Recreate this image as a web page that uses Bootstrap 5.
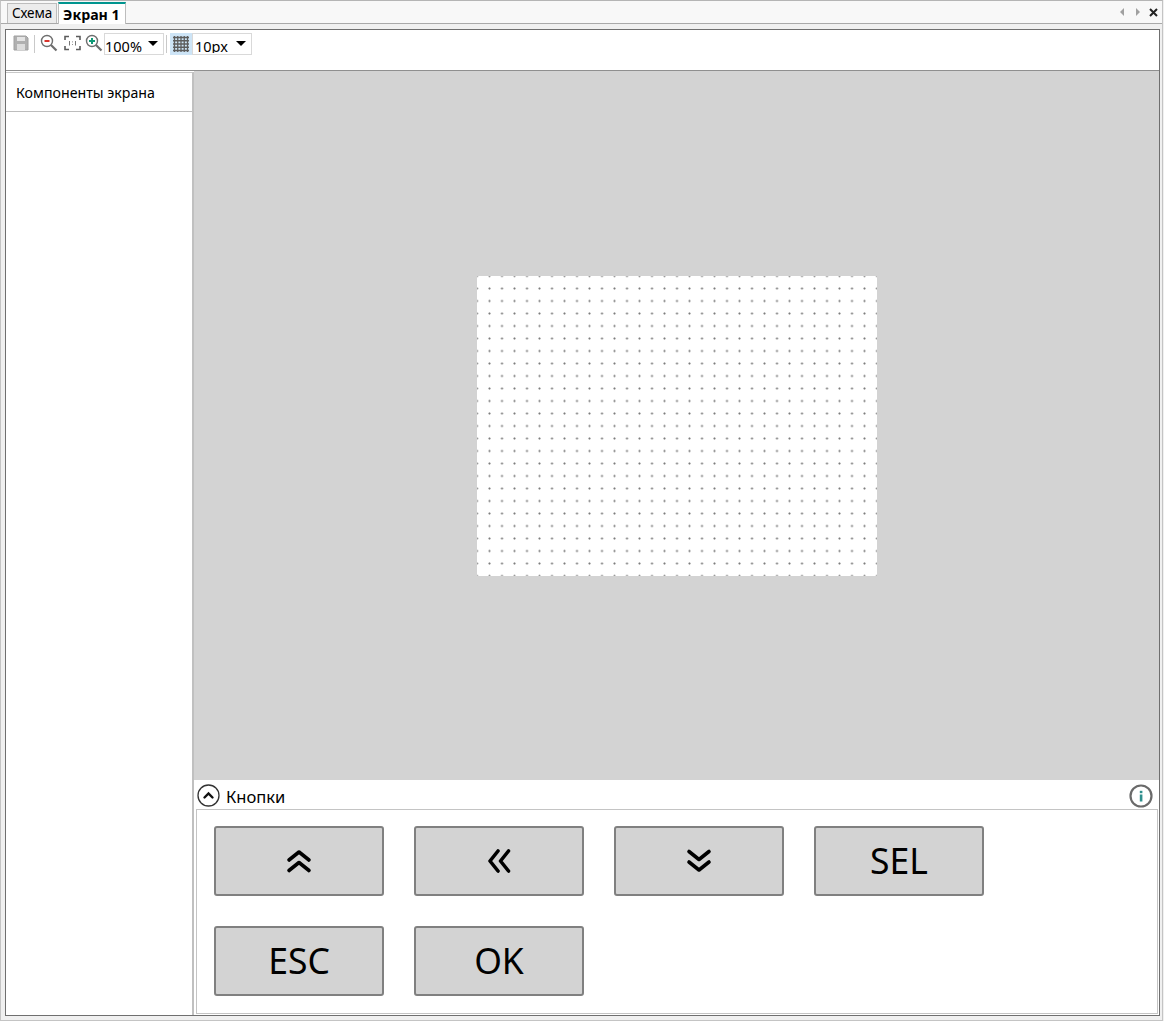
<!DOCTYPE html>
<html lang="ru">
<head>
<meta charset="utf-8">
<title>Экран 1</title>
<link href="https://cdn.jsdelivr.net/npm/bootstrap@5.3.0/dist/css/bootstrap.min.css" rel="stylesheet">
<style>
html,body{height:100%;}
body{font-family:"Noto Sans","Open Sans","Liberation Sans",sans-serif;background:#f0f0f0;color:#000;overflow:hidden;}
.app-shell{width:1163px;height:1021px;display:flex;flex-direction:column;border-top:1px solid #b5b5b5;border-left:1px solid #c4c4c4;border-right:1px solid #c4c4c4;border-bottom:1px solid #c4c4c4;}
.tab-strip{height:23px;background:#f8f8f8;border-bottom:1px solid #a9a9a9;display:flex;align-items:flex-end;padding-left:6px;flex:none;}
.tab-item{font-size:13.5px;line-height:18px;height:20px;padding:0 4px 0 4px;background:#ececec;border:1px solid #bdbdbd;border-bottom:0;letter-spacing:-.1px;}
.tab-on{height:22px;margin-left:1px;padding:2px 5px 0 4px;background:#fff;border:1px solid #bdbdbd;border-top:2px solid #00958f;border-bottom:0;font-weight:700;font-size:14.2px;line-height:18px;margin-bottom:-1px;}
.strip-ctrls{margin-left:auto;display:flex;align-items:center;gap:10px;height:22px;padding-right:4px;}
.ctrl-close{margin-left:-2px;}
.frame-outer{flex:1;padding:5px 2px 4px 4px;min-height:0;background:#f0f0f0;}
.frame-inner{height:100%;border:1px solid #6f6f6f;background:#fff;display:flex;flex-direction:column;}
.tool-row{height:41px;flex:none;border-bottom:1px solid #8f8f8f;padding:3px 0 0 5px;display:flex;align-items:flex-start;}
.tool-ico{width:20px;height:20px;display:flex;align-items:center;justify-content:center;flex:none;}
.tool-sep{width:1px;height:18px;background:#c9c9c9;margin:2px 4px 2px 3px;flex:none;}
.combo-box{height:22px;border:1px solid #d9d9d9;font-size:14.5px;line-height:24px;display:flex;justify-content:space-between;overflow:hidden;background:#fff;flex:none;}
.combo-text{display:block;height:19px;overflow:hidden;}
.combo-caret{width:0;height:0;border-left:5px solid transparent;border-right:5px solid transparent;border-top:5px solid #000;margin:7px 5px 0 0;}
.grid-toggle{width:22px;height:22px;background:#cde4f6;}
.work-row{flex:1;display:flex;min-height:0;}
.side-pane{width:188px;flex:none;border-right:2px solid #c0c0c0;border-top:1px solid #c8c8c8;margin-top:1px;background:#fff;}
.side-head{height:39px;border-bottom:1px solid #bdbdbd;font-size:14.2px;line-height:39px;padding-left:10px;}
.main-pane{flex:1;display:flex;flex-direction:column;min-width:0;}
.canvas-area{height:709px;flex:none;background:#d3d3d3;padding:205px 0 0 283px;}
.screen-grid{width:400px;height:300px;background-color:#fff;background-image:radial-gradient(circle at center,#7d7d7d 0,#7d7d7d .7px,#d3d3d3 1.1px,transparent 1.5px);background-size:12.5px 12.5px;background-position:-6.25px -6.25px;}
.keys-head{height:29px;flex:none;display:flex;align-items:center;padding:2px 6px 0 3px;font-size:16.5px;}
.keys-label{margin:1px 0 0 6px;line-height:1;padding-top:2px;}
.keys-body{flex:1;border:1px solid #c4c4c4;margin:0 1px 1px 2px;padding:16px 0 0 17px;display:flex;flex-wrap:wrap;gap:30px;align-content:flex-start;}
.key-btn{width:170px;height:70px;background:#d3d3d3;border:2px solid #808080;border-radius:3px;font-size:35.500px;line-height:1;color:#000;padding:0;display:flex;align-items:center;justify-content:center;font-family:"Noto Sans","Open Sans",sans-serif;}
.key-btn:hover,.key-btn:active{background:#d3d3d3!important;border-color:#808080!important;color:#000!important;}
.gap-l3{margin-left:3px;}
.gap-l2{margin-left:2px;}
.combo-zoom{width:60px;}
.combo-step{width:60px;padding-left:2px;}
.sep-tight{margin-left:2px;margin-right:3px;}
</style>
</head>
<body>
<div class="app-shell">
  <div class="tab-strip">
    <div class="tab-item">Схема</div>
    <div class="tab-on">Экран 1</div>
    <div class="strip-ctrls">
      <svg width="6" height="10" viewBox="0 0 6 10"><path d="M5 1v8L1 5z" fill="#a0a0a0"/></svg>
      <svg width="6" height="10" viewBox="0 0 6 10"><path d="M1 1v8l4-4z" fill="#a0a0a0"/></svg>
      <svg width="9" height="9" viewBox="0 0 9 9" class="ctrl-close"><path d="M1 1l7 7M8 1L1 8" stroke="#222" stroke-width="2"/></svg>
    </div>
  </div>
  <div class="frame-outer">
    <div class="frame-inner">
      <div class="tool-row">
        <div class="tool-ico"><svg width="16" height="16" viewBox="0 0 16 16"><path d="M1 1h12l2 2v12H1z" fill="#b0b0b0" stroke="#a0a0a0"/><rect x="4" y="2" width="8" height="4" fill="#e4e4e4"/><rect x="4" y="9" width="8" height="6" fill="#dcdcdc"/></svg></div>
        <div class="tool-sep"></div>
        <div class="tool-ico"><svg width="18" height="18" viewBox="0 0 18 18"><circle cx="7" cy="7" r="5.500" fill="#fff" stroke="#6e6e6e" stroke-width="1.400"/><path d="M4.500 7h5" stroke="#d8342c" stroke-width="2"/><path d="M11 11l5.500 5.500" stroke="#6e6e6e" stroke-width="2.200"/></svg></div>
        <div class="tool-ico gap-l3"><svg width="17" height="16" viewBox="0 0 17 16" fill="none"><path d="M1 5V1.500h4M12 1.500h4V5M16 11v3.500h-4M5 14.500H1V11" stroke="#5c5c5c" stroke-width="1.600"/><path d="M5.500 6v4.500M11.500 6v4.500" stroke="#777" stroke-width="1"/><path d="M8.500 6.500v.8M8.500 9v.8" stroke="#777" stroke-width="1"/></svg></div>
        <div class="tool-ico gap-l2"><svg width="18" height="18" viewBox="0 0 18 18"><circle cx="7" cy="7" r="5.500" fill="#fff" stroke="#6e6e6e" stroke-width="1.400"/><path d="M4 7h6M7 4v6" stroke="#0f9a76" stroke-width="2"/><path d="M11 11l5.500 5.500" stroke="#6e6e6e" stroke-width="2.200"/></svg></div>
        <div class="combo-box combo-zoom"><span class="combo-text">100%</span><span class="combo-caret"></span></div>
        <div class="tool-sep sep-tight"></div>
        <div class="tool-ico grid-toggle"><svg width="16" height="16" viewBox="0 0 16 16" fill="none" stroke="#5d5d5d" stroke-width="1.300"><path d="M0 1.500h16M0 4.750h16M0 8h16M0 11.250h16M0 14.500h16M1.500 0v16M4.750 0v16M8 0v16M11.250 0v16M14.500 0v16"/></svg></div>
        <div class="combo-box combo-step"><span class="combo-text">10px</span><span class="combo-caret"></span></div>
      </div>
      <div class="work-row">
        <div class="side-pane"><div class="side-head">Компоненты экрана</div></div>
        <div class="main-pane">
          <div class="canvas-area"><div class="screen-grid"></div></div>
          <div class="keys-head">
            <svg width="23" height="23" viewBox="0 0 23 23" fill="none"><circle cx="11.500" cy="11.500" r="10.500" stroke="#333" stroke-width="1.300"/><path d="M7.500 13.500l4-4 4 4" stroke="#111" stroke-width="2.400" stroke-linecap="round"/></svg>
            <span class="keys-label">Кнопки</span>
            <svg width="24" height="24" viewBox="0 0 24 24" fill="none" class="ms-auto"><circle cx="12" cy="12" r="10.500" stroke="#6a6a6a" stroke-width="2.200"/><rect x="10.800" y="10.500" width="2.600" height="7" fill="#2f8f8d"/><rect x="10.800" y="6.800" width="2.600" height="2.400" fill="#2f8f8d"/></svg>
          </div>
          <div class="keys-body">
            <button type="button" class="btn key-btn"><svg width="26" height="26" viewBox="0 0 26 26" fill="none" stroke="#000" stroke-width="3.600" stroke-linecap="round" stroke-linejoin="round"><path d="M3 12l10-8 10 8M3 22.500l10-8 10 8"/></svg></button>
            <button type="button" class="btn key-btn"><svg width="26" height="26" viewBox="0 0 26 26" fill="none" stroke="#000" stroke-width="3.600" stroke-linecap="round" stroke-linejoin="round"><path d="M12 3l-8 10 8 10M22.500 3l-8 10 8 10"/></svg></button>
            <button type="button" class="btn key-btn"><svg width="26" height="26" viewBox="0 0 26 26" fill="none" stroke="#000" stroke-width="3.600" stroke-linecap="round" stroke-linejoin="round"><path d="M3 3.500l10 8 10-8M3 14l10 8 10-8"/></svg></button>
            <button type="button" class="btn key-btn">SEL</button>
            <button type="button" class="btn key-btn">ESC</button>
            <button type="button" class="btn key-btn">OK</button>
          </div>
        </div>
      </div>
    </div>
  </div>
</div>
<script src="https://cdn.jsdelivr.net/npm/bootstrap@5.3.0/dist/js/bootstrap.bundle.min.js"></script>
</body>
</html>
